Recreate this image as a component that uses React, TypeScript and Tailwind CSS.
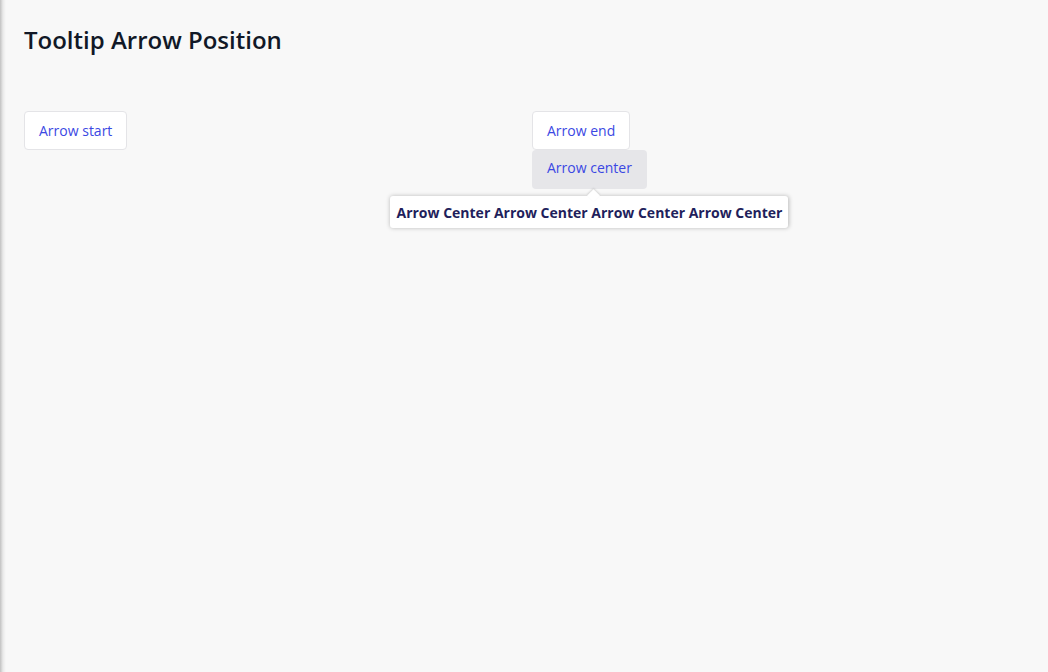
import React from "react";

const btn = "h-[39px] px-[14px] rounded-[4px] text-sm text-[#3b48e3] leading-none";

const App = () => {
    return (
        <div
            className="min-h-[672px] bg-[#f8f8f8] bg-[linear-gradient(to_right,rgba(0,0,0,0.22),rgba(0,0,0,0.06)_3px,transparent_6px)] px-6 pt-[24px]"
            style={{ fontFamily: '"Open Sans", "Noto Sans", sans-serif' }}
        >
            <h1 className="text-2xl font-semibold leading-8 text-[#111827]">Tooltip Arrow Position</h1>

            <div className="grid grid-cols-2 gap-4 mt-[55px]">
                <div className="flex items-start">
                    <button className={`${btn} bg-white border border-[#e4e4e7]`}>Arrow start</button>
                </div>
                <div className="flex flex-col items-start">
                    <button className={`${btn} bg-white border border-[#e4e4e7]`}>Arrow end</button>
                    <div className="relative">
                        <button className={`${btn} h-[38px] px-[15px] pb-[3px] bg-[#e6e6e9]`}>Arrow center</button>
                        <div className="absolute left-1/2 -translate-x-1/2 top-[46px] whitespace-nowrap bg-white rounded-[3px] shadow-[0_0_4px_rgba(0,0,0,0.25)] px-[6px] pt-[7px] pb-[5px] text-sm font-bold leading-5 text-[#1f1f5c]">
                            <div className="absolute left-1/2 -top-[5px] w-[9px] h-[9px] bg-white rotate-45 shadow-[-1px_-1px_2px_rgba(0,0,0,0.12)]" />
                            <span className="relative">Arrow Center Arrow Center Arrow Center Arrow Center</span>
                        </div>
                    </div>
                </div>
            </div>
        </div>
    );
};

export default App;
